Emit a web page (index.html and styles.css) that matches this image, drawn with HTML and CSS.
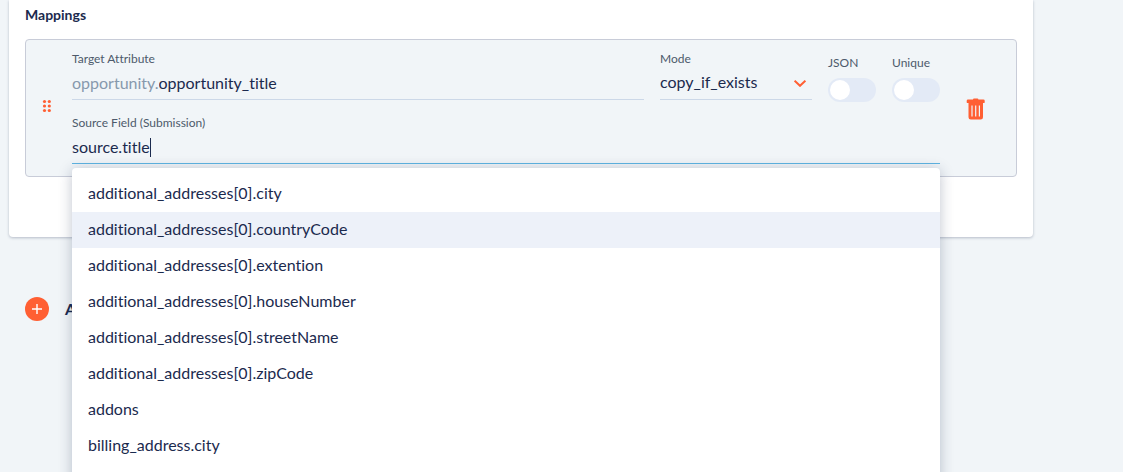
FILE: index.html
```html
<!DOCTYPE html>
<html lang="en">
<head>
<meta charset="utf-8">
<meta name="viewport" content="width=device-width, initial-scale=1">
<title>Mappings</title>
<link rel="stylesheet" href="styles.css">
</head>
<body>
<main class="page">
  <section class="card">
    <h2 class="card-title">Mappings</h2>
    <div class="mapping">
      <button class="icon-button drag-handle" type="button" aria-label="Reorder mapping">
        <svg width="10" height="14" viewBox="0 0 10 14" fill="currentColor" aria-hidden="true">
          <circle cx="2.5" cy="2.5" r="1.6"/><circle cx="7.3" cy="2.5" r="1.6"/>
          <circle cx="2.5" cy="7" r="1.6"/><circle cx="7.3" cy="7" r="1.6"/>
          <circle cx="2.5" cy="11.5" r="1.6"/><circle cx="7.3" cy="11.5" r="1.6"/>
        </svg>
      </button>
      <div class="fields">
        <div class="field-row">
          <div class="field target">
            <label class="label" for="target">Target Attribute</label>
            <div class="control">
              <span class="prefix">opportunity.</span>
              <input class="input" id="target" type="text" value="opportunity_title">
            </div>
          </div>
          <div class="field mode">
            <label class="label" for="mode">Mode</label>
            <div class="control">
              <select class="select" id="mode"><option>copy_if_exists</option></select>
              <svg class="chevron" width="12" height="8" viewBox="0 0 12 8" fill="none" stroke="currentColor" stroke-width="2" aria-hidden="true"><path d="M0.6 1.6 6 6.8 11.4 1.6"/></svg>
            </div>
          </div>
          <div class="toggle-field">
            <label class="label" for="json">JSON</label>
            <input class="toggle" id="json" type="checkbox" role="switch">
          </div>
          <div class="toggle-field">
            <label class="label" for="unique">Unique</label>
            <input class="toggle" id="unique" type="checkbox" role="switch">
          </div>
        </div>
        <div class="field source">
          <label class="label" for="source">Source Field (Submission)</label>
          <div class="control active">
            <input class="input fitted" id="source" type="text" value="source.title" autocomplete="off">
            <span class="caret"></span>
          </div>
          <ul class="menu" role="listbox" aria-label="Source fields">
            <li class="option" role="option">additional_addresses[0].city</li>
            <li class="option highlighted" role="option" aria-selected="true">additional_addresses[0].countryCode</li>
            <li class="option" role="option">additional_addresses[0].extention</li>
            <li class="option" role="option">additional_addresses[0].houseNumber</li>
            <li class="option" role="option">additional_addresses[0].streetName</li>
            <li class="option" role="option">additional_addresses[0].zipCode</li>
            <li class="option" role="option">addons</li>
            <li class="option" role="option">billing_address.city</li>
          </ul>
        </div>
      </div>
      <button class="icon-button delete" type="button" aria-label="Delete mapping">
        <svg width="20" height="22" viewBox="0 0 20 22" aria-hidden="true">
          <path fill="currentColor" fill-rule="evenodd" d="M7 1.4Q7 .4 8 .4h3.4q1 0 1 1h5q1.3 0 1.3 1.3v1.5q0 .9-.9.9H17v14.2q0 2.3-2.3 2.3H4.8q-2.3 0-2.3-2.3V5.1H1.6Q.7 5.1.7 4.2V2.7Q.7 1.4 2 1.4ZM5.4 7.4v11.2h1.2V7.4ZM9.1 7.4v11.2h1.2V7.4ZM12.8 7.4v11.2H14V7.4Z"/>
        </svg>
      </button>
    </div>
  </section>
  <button class="add" type="button">
    <span class="add-icon">
      <svg width="12" height="12" viewBox="0 0 12 12" fill="none" stroke="currentColor" stroke-width="1.4" aria-hidden="true"><path d="M6 1v10M1 6h10"/></svg>
    </span>
    Add
  </button>
</main>
</body>
</html>
```
FILE: styles.css
```css
* {
  box-sizing: border-box;
}

body {
  margin: 0;
  height: 100vh;
  overflow: hidden;
  background: #f1f5f8;
  color: #1b2a4e;
  font-family: Lato, "Open Sans", sans-serif;
  font-size: 16px;
  font-variant-ligatures: none;
  line-height: 24px;
}

button,
input,
select {
  margin: 0;
  padding: 0;
  border: 0;
  background: none;
  color: inherit;
  font: inherit;
  font-variant-ligatures: none;
}

.page {
  padding: 0 90px 0 9px;
}

.card {
  padding: 7px 16px 60px;
  border-radius: 0 0 4px 4px;
  background: #fff;
  box-shadow: 0 1px 3px rgba(27, 42, 78, 0.28);
}

.card-title {
  margin: 0 0 16px;
  font-size: 14px;
  line-height: 16px;
  font-weight: 700;
}

.mapping {
  display: flex;
  align-items: center;
  padding: 11px 30px 12px 16px;
  border: 1px solid #c8ccd8;
  border-radius: 4px;
  background: #f1f5f8;
}

.icon-button {
  display: flex;
  color: #ff5f33;
  cursor: pointer;
}

.drag-handle {
  padding-bottom: 4px;
  margin-right: 20px;
}

.delete {
  margin-left: 26px;
  padding-top: 2px;
}

.fields {
  flex: 1;
  display: flex;
  flex-direction: column;
  gap: 13px;
}

.field-row {
  display: flex;
  align-items: flex-start;
  gap: 16px;
}

.label {
  display: block;
  color: #4d5a6b;
  font-size: 12px;
  line-height: 16px;
}

.target {
  flex: 1;
}

.mode {
  width: 152px;
}

.control {
  display: flex;
  align-items: center;
  height: 33px;
  border-bottom: 1px solid #ccd8e8;
}

.control.active {
  border-color: #5fb4e2;
}

.prefix {
  color: #8799ad;
}

.input {
  flex: 1;
  min-width: 0;
  height: 32px;
  padding-bottom: 2px;
  outline: none;
}

.input.fitted {
  flex: none;
  field-sizing: content;
  caret-color: transparent;
}

.caret {
  width: 1px;
  height: 19px;
  background: #1b2a4e;
}

.select {
  flex: 1;
  min-width: 0;
  height: 32px;
  padding-bottom: 2px;
  appearance: none;
  outline: none;
}

.chevron {
  margin-right: 6px;
  color: #ff5f33;
}

.toggle-field {
  display: flex;
  flex-direction: column;
  gap: 7px;
  width: 48px;
  padding-top: 4px;
}

.toggle {
  display: flex;
  align-items: center;
  width: 48px;
  height: 24px;
  padding: 2px;
  border-radius: 12px;
  background: #e3eaf6;
  appearance: none;
}

.toggle::before {
  content: "";
  width: 20px;
  height: 20px;
  border-radius: 50%;
  background: #fff;
}

.toggle:checked {
  justify-content: flex-end;
  background: #ff5f33;
}

.source {
  position: relative;
}

.menu {
  position: absolute;
  top: 100%;
  left: 0;
  right: 0;
  z-index: 1;
  margin: 4px 0 0;
  padding: 8px 0 32px;
  border-radius: 4px;
  background: #fff;
  box-shadow: 0 2px 14px rgba(27, 42, 78, 0.28);
  list-style: none;
}

.option {
  padding: 5px 16px 7px;
}

.option.highlighted {
  background: #edf1f9;
}

.add {
  display: flex;
  align-items: center;
  gap: 16px;
  margin: 60px 0 0 16px;
  font-weight: 700;
}

.add-icon {
  display: grid;
  place-items: center;
  width: 24px;
  height: 24px;
  border-radius: 50%;
  background: #ff5f33;
  color: #fff;
}
```
